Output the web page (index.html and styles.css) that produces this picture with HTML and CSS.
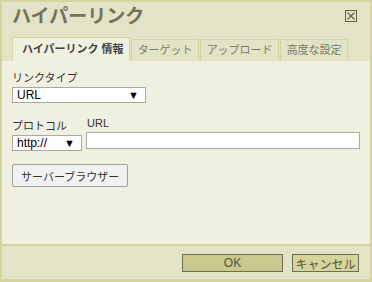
FILE: index.html
```html
<!DOCTYPE html>
<html lang="ja">
<head>
    <meta charset="UTF-8">
    <title>ハイパーリンク</title>
    <link rel="stylesheet" href="styles.css">
</head>
<body>
    <div class="dialog">
        <div class="dialog-header">
            <div class="title-row">
                <h1 class="dialog-title">ハイパーリンク</h1>
                <span class="close-btn">
                    <svg width="12" height="12" viewBox="0 0 12 12">
                        <rect x="0.5" y="0.5" width="11" height="11" fill="none" stroke="#5f5f45"/>
                        <path d="M2.5 2.5 L9.5 9.5 M9.5 2.5 L2.5 9.5" stroke="#5f5f45" stroke-width="1.2"/>
                    </svg>
                </span>
            </div>
            <div class="tabs">
                <span class="tab active">ハイパーリンク 情報</span>
                <span class="tab">ターゲット</span>
                <span class="tab">アップロード</span>
                <span class="tab">高度な設定</span>
            </div>
        </div>

        <div class="dialog-body">
            <div class="field">
                <label>リンクタイプ</label>
                <div class="select wide"><span>URL</span><span class="arrow">▼</span></div>
            </div>

            <div class="url-row">
                <div class="field">
                    <label>プロトコル</label>
                    <div class="select narrow"><span>http://</span><span class="arrow">▼</span></div>
                </div>
                <div class="field grow">
                    <label class="url-label">URL</label>
                    <div class="text-input"></div>
                </div>
            </div>

            <button class="browse-btn">サーバーブラウザー</button>
        </div>

        <div class="dialog-footer">
            <button class="btn ok">OK</button>
            <button class="btn cancel">キャンセル</button>
        </div>
    </div>
</body>
</html>
```

FILE: styles.css
```css
html, body {
    margin: 0;
    padding: 0;
}

body {
    font-family: Arial, 'Liberation Sans', 'Noto Sans CJK JP', sans-serif;
    font-size: 11px;
    color: #222;
}

.dialog {
    width: 372px;
    height: 282px;
    box-sizing: border-box;
    border: 2px solid #d4d49f;
    border-bottom-width: 3px;
    background-color: #e3e3c7;
    display: flex;
    flex-direction: column;
}

.dialog-header {
    padding: 0 0 0 10px;
}

.title-row {
    display: flex;
    justify-content: space-between;
    align-items: flex-start;
    height: 35px;
}

.dialog-title {
    margin: 0;
    padding-top: 3px;
    font-size: 19px;
    font-weight: bold;
    color: #737357;
    line-height: 24px;
}

.close-btn {
    margin: 8px 13px 0 0;
    display: block;
    height: 12px;
}

.tabs {
    display: flex;
    gap: 1px;
    align-items: flex-end;
    height: 24px;
}

.tab {
    display: block;
    height: 21px;
    line-height: 21px;
    padding: 0 5px 0 6px;
    border: 1px solid #d4d49f;
    border-bottom: none;
    background-color: #e3e3c7;
    color: #7a7a66;
    font-size: 11px;
}

.tab.active {
    height: 23px;
    line-height: 23px;
    background-color: #f0f0e1;
    color: #444;
    font-weight: bold;
    padding: 0 5px 0 9px;
}

.dialog-body {
    flex: 1;
    background-color: #f0f0e1;
    border-bottom: 2px solid #d4d49f;
    padding: 9px 10px 0 10px;
}

.field {
    display: flex;
    flex-direction: column;
}

.field label {
    font-size: 11px;
    color: #333;
    line-height: 16px;
    margin-bottom: 1px;
}

.select {
    height: 16px;
    box-sizing: border-box;
    border: 1px solid #a9a9a0;
    background-color: #fff;
    display: flex;
    justify-content: space-between;
    align-items: center;
    padding: 0 6px 0 4px;
    font-size: 12px;
    color: #000;
}

.select .arrow {
    font-size: 11px;
}

.wide {
    width: 134px;
}

.narrow {
    width: 70px;
}

.url-row {
    display: flex;
    gap: 4px;
    margin-top: 12px;
    align-items: flex-end;
}

.grow {
    flex: 1;
}

.url-label {
    padding-left: 1px;
}

.text-input {
    height: 17px;
    box-sizing: border-box;
    border: 1px solid #a9a9a0;
    background-color: #fff;
    margin-bottom: 2px;
}

.browse-btn {
    margin-top: 13px;
    height: 23px;
    padding: 0 8px;
    font-family: inherit;
    font-size: 11px;
    color: #333;
    background-color: #f1f1f1;
    border: 1px solid #a0a0a0;
    border-radius: 2px;
}

.dialog-footer {
    height: 33px;
    display: flex;
    justify-content: flex-end;
    align-items: center;
    gap: 9px;
    padding-right: 11px;
}

.btn {
    height: 18px;
    font-family: inherit;
    font-size: 12px;
    color: #555540;
    border: 1px solid #6f6f50;
    padding: 0;
}

.ok {
    width: 101px;
    background-color: #c9c98f;
}

.cancel {
    width: 67px;
    background-color: #d4d49c;
}
```
